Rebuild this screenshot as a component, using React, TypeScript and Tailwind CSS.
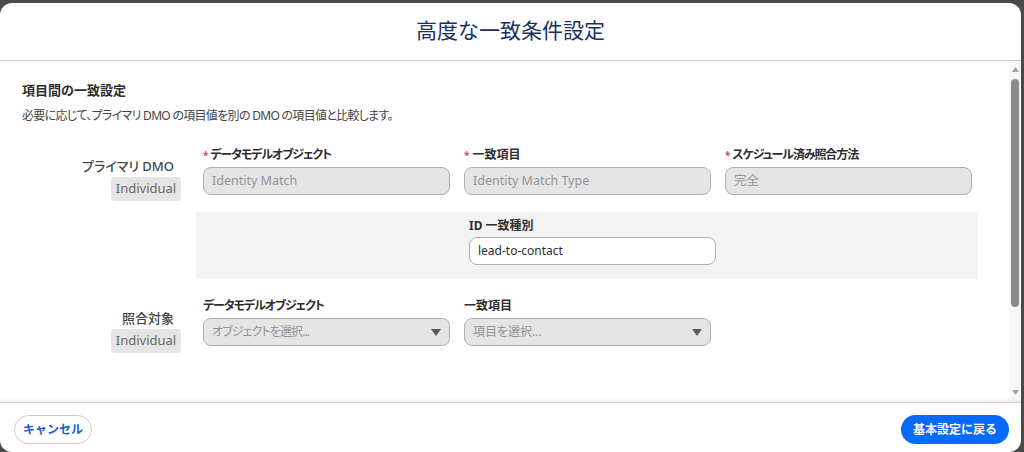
const FONT = { fontFamily: '"Noto Sans", "Noto Sans CJK JP", sans-serif' };

function Req() {
  return <span className="mr-[3px] align-top text-[10px] text-[#d0457a]">*</span>;
}

function FieldLabel({ text, required, tight }: { text: string; required?: boolean; tight?: boolean }) {
  return (
    <div
      className={`h-4 text-[12px] leading-4 font-bold text-[#2e2e2e] [font-feature-settings:'palt'] ${
        tight ? "tracking-[-1.1px]" : ""
      }`}
    >
      {required && <Req />}
      {text}
    </div>
  );
}

function ReadField({ label, value, tight }: { label: string; value: string; tight?: boolean }) {
  return (
    <div className="flex flex-col">
      <FieldLabel text={label} required tight={tight} />
      <div className="mt-1 flex h-[28px] items-center rounded-lg border border-[#b0b0b0] bg-[#e5e5e5] px-2 text-[12.5px] text-[#939393]">
        {value}
      </div>
    </div>
  );
}

function SelectField({ label, placeholder, tight }: { label: string; placeholder: string; tight?: boolean }) {
  return (
    <div className="flex flex-col">
      <FieldLabel text={label} tight={tight} />
      <div className="mt-1 flex h-[28px] items-center justify-between rounded-lg border border-[#b0b0b0] bg-[#e5e5e5] pl-2 pr-[8px] text-[12px] text-[#939393] [font-feature-settings:'palt']">
        <span className={tight ? "tracking-[-0.9px]" : ""}>{placeholder}</span>
        <svg width="10" height="7" viewBox="0 0 10 7">
          <path d="M0 0 L10 0 L5 7 Z" fill="#5a5a5a" />
        </svg>
      </div>
    </div>
  );
}

// left-hand caption with the object badge under it
function Side({ label, top }: { label: string; top: string }) {
  return (
    <div className={`flex w-[159px] shrink-0 flex-col items-end ${top}`}>
      <div className="mr-[7px] text-[13px] leading-4 font-medium text-[#444] [font-feature-settings:'palt']">
        {label}
      </div>
      <div className="mt-[3px] flex h-6 w-[70px] items-center justify-center rounded-sm bg-[#e5e5e5] text-[13px] font-normal text-[#666]">
        Individual
      </div>
    </div>
  );
}

function Scrollbar() {
  return (
    <div className="flex w-[12px] shrink-0 flex-col items-center bg-[#f7f7f7] pt-[6px] pb-[7px]">
      <svg width="7" height="5" viewBox="0 0 7 5">
        <path d="M0 5 L7 5 L3.5 0 Z" fill="#a3a3a3" />
      </svg>
      <div className="mt-[7px] h-[228px] w-[8px] rounded-full bg-[#8c8c8c]" />
      <div className="flex-1" />
      <svg width="7" height="5" viewBox="0 0 7 5">
        <path d="M0 0 L7 0 L3.5 5 Z" fill="#a3a3a3" />
      </svg>
    </div>
  );
}

export default function App() {
  return (
    <div className="h-[452px] w-[1024px] overflow-hidden bg-[#4a4a4a] pt-[3px] pr-[3px]" style={FONT}>
      <div className="flex h-[449px] flex-col overflow-hidden rounded-xl bg-white">
        <div className="flex h-[58px] shrink-0 items-center justify-center border-b border-[#c9c9c9] pb-px text-[21px] text-[#16325c]">
          高度な一致条件設定
        </div>

        <div className="flex h-[341px] shrink-0">
          <div className="flex-1 pt-[19px] pl-[22px]">
            <h2 className="text-[13px] leading-5 font-bold text-[#2e2e2e]">項目間の一致設定</h2>
            <p className="mt-[6px] text-[12px] leading-5 tracking-[-0.7px] text-[#444] [font-feature-settings:'palt']">
              必要に応じて、プライマリ DMO の項目値を別の DMO の項目値と比較します。
            </p>

            <div className="mt-[21px] flex gap-[22px]">
              <Side label="プライマリ DMO" top="pt-[11px]" />
              <div className="grid grid-cols-[247px_247px_247px] gap-x-[14px]">
                <ReadField label="データモデルオブジェクト" value="Identity Match" tight />
                <ReadField label="一致項目" value="Identity Match Type" />
                <ReadField label="スケジュール済み照合方法" value="完全" tight />
              </div>
            </div>

            <div className="mt-[11px] ml-[174px] w-[782px] bg-[#f3f3f3] pt-[6px] pb-[14px] pl-[12px]">
              <div className="grid grid-cols-[247px_247px_247px] gap-x-[14px]">
                <div />
                <div className="flex flex-col">
                  <FieldLabel text="ID 一致種別" />
                  <div className="mt-[3px] flex h-[28px] items-center rounded-lg border border-[#b0b0b0] bg-white px-2 text-[12px] text-[#2e2e2e]">
                    lead-to-contact
                  </div>
                </div>
              </div>
            </div>

            <div className="mt-[19px] flex gap-[22px]">
              <Side label="照合対象" top="pt-[12px]" />
              <div className="grid grid-cols-[247px_247px_247px] gap-x-[14px]">
                <SelectField label="データモデルオブジェクト" placeholder="オブジェクトを選択..." tight />
                <SelectField label="一致項目" placeholder="項目を選択..." />
              </div>
            </div>
          </div>
          <Scrollbar />
        </div>

        <div className="flex flex-1 items-start justify-between border-t border-[#d0d0d0] pt-[12px] pr-[12px] pl-[14px] shadow-[0_-2px_3px_rgba(0,0,0,0.06)]">
          <button className="h-[29px] w-[78px] rounded-full border border-[#c9c9c9] bg-white text-[12px] font-bold text-[#1b5fd0]">
            キャンセル
          </button>
          <button className="h-[29px] w-[108px] rounded-full bg-[#066afe] text-[12px] font-bold text-white">
            基本設定に戻る
          </button>
        </div>
      </div>
    </div>
  );
}
